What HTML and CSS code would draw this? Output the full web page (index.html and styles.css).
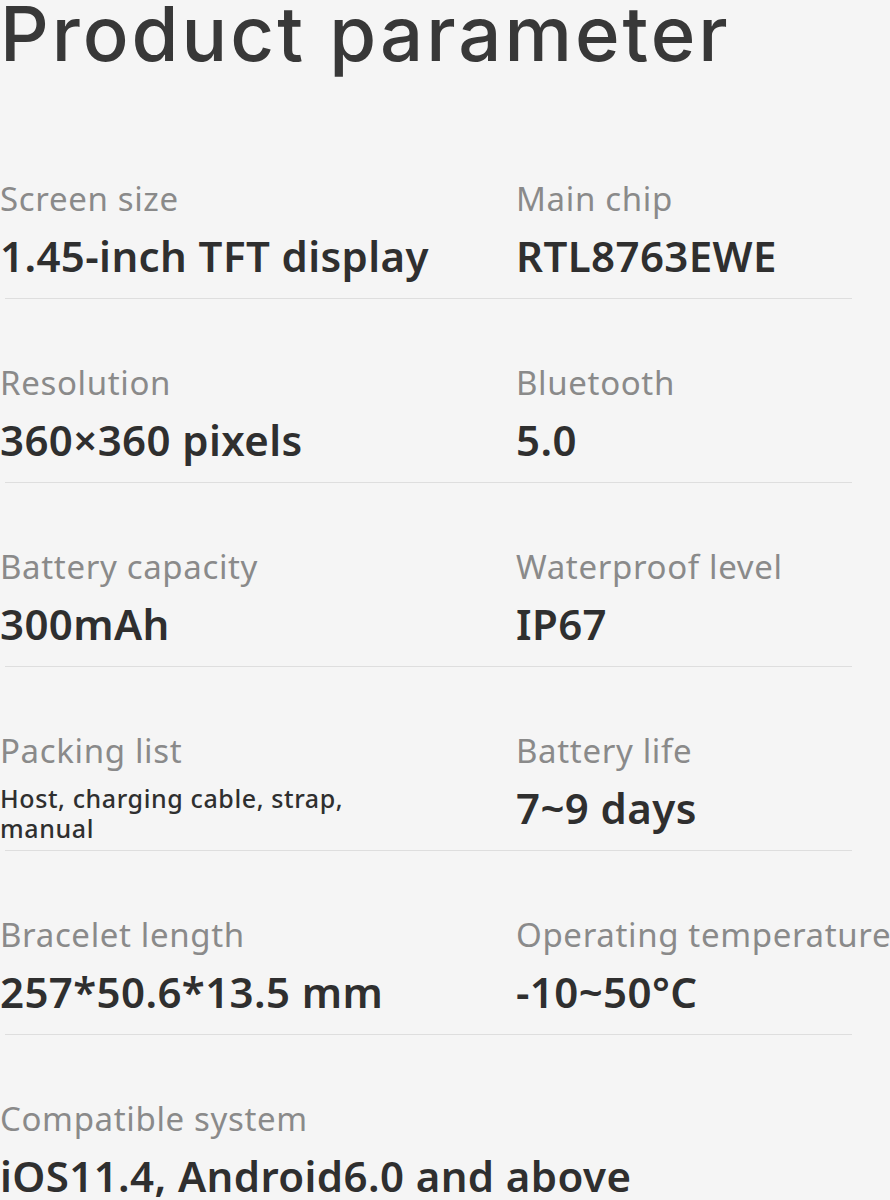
FILE: index.html
```html
<!DOCTYPE html>
<html lang="en">
<head>
<meta charset="utf-8">
<title>Product parameter</title>
<link rel="stylesheet" href="styles.css">
</head>
<body>
<main class="page">
  <h1 class="title">Product parameter</h1>
  <section class="specs">
    <div class="row">
      <div class="cell"><div class="label">Screen size</div><div class="value">1.45-inch TFT display</div></div>
      <div class="cell"><div class="label">Main chip</div><div class="value">RTL8763EWE</div></div>
    </div>
    <div class="row">
      <div class="cell"><div class="label">Resolution</div><div class="value">360×360 pixels</div></div>
      <div class="cell"><div class="label">Bluetooth</div><div class="value">5.0</div></div>
    </div>
    <div class="row">
      <div class="cell"><div class="label">Battery capacity</div><div class="value">300mAh</div></div>
      <div class="cell"><div class="label">Waterproof level</div><div class="value">IP67</div></div>
    </div>
    <div class="row">
      <div class="cell"><div class="label">Packing list</div><div class="value small">Host, charging cable, strap,<br>manual</div></div>
      <div class="cell"><div class="label">Battery life</div><div class="value">7~9 days</div></div>
    </div>
    <div class="row">
      <div class="cell"><div class="label">Bracelet length</div><div class="value">257*50.6*13.5 mm</div></div>
      <div class="cell"><div class="label">Operating temperature</div><div class="value">-10~50°C</div></div>
    </div>
    <div class="row single">
      <div class="cell"><div class="label">Compatible system</div><div class="value">iOS11.4, Android6.0 and above</div></div>
    </div>
  </section>
</main>
</body>
</html>
```
FILE: styles.css
```css
html, body {
  margin: 0;
  padding: 0;
  background: #f5f5f5;
}
.page {
  width: 890px;
  height: 1200px;
  overflow: hidden;
  font-family: "Noto Sans", "Open Sans", sans-serif;
}
.title {
  margin: 0;
  font-family: Inter, "Liberation Sans", Arial, sans-serif;
  font-weight: 500;
  font-size: 76px;
  line-height: 66px;
  letter-spacing: 3px;
  color: #383838;
  white-space: nowrap;
}
.specs {
  margin-top: 49px;
  width: 852px;
}
.row {
  display: grid;
  grid-template-columns: 516px 336px;
  padding-top: 64px;
}
.row::after {
  content: "";
  grid-column: 1 / -1;
  margin-top: 17px;
  margin-left: 5px;
  border-top: 1px solid #dedede;
}
.row.single {
  grid-template-columns: 852px;
}
.label {
  font-size: 33px;
  line-height: 40px;
  letter-spacing: 0.65px;
  color: #8a8a8a;
  white-space: nowrap;
}
.value {
  margin-top: 12px;
  font-size: 42px;
  line-height: 50px;
  font-weight: 600;
  letter-spacing: 0.4px;
  color: #2f2f2f;
  white-space: nowrap;
}
.value.small {
  font-size: 25px;
  line-height: 30px;
  font-weight: 500;
  letter-spacing: 0.6px;
  margin-top: 12px;
  margin-bottom: -10px;
}
```
